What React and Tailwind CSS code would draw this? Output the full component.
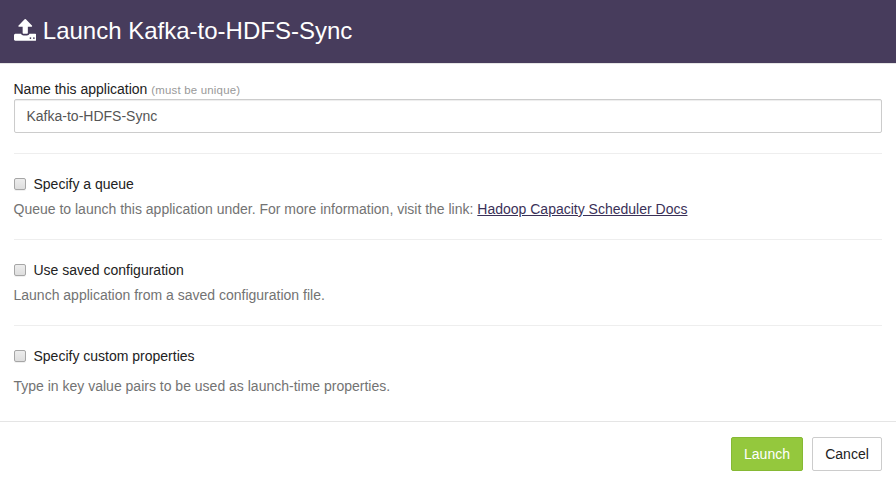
function UploadIcon() {
  return (
    <svg viewBox="64 64 1664 1600" className="mb-[3px] mr-[6.7px] h-[21.8px] w-[22.5px]" fill="currentColor">
      <path d="M1344 1472q0-26-19-45t-45-19-45 19-19 45 19 45 45 19 45-19 19-45zm256 0q0-26-19-45t-45-19-45 19-19 45 19 45 45 19 45-19 19-45zm128-224v320q0 40-28 68t-68 28h-1472q-40 0-68-28t-28-68v-320q0-40 28-68t68-28h427q21 56 70.5 92t110.5 36h256q61 0 110.5-36t70.5-92h427q40 0 68 28t28 68zm-325-648q-17 40-59 40h-256v448q0 26-19 45t-45 19h-256q-26 0-45-19t-19-45v-448h-256q-42 0-59-40-17-39 14-69l448-448q18-19 45-19t45 19l448 448q31 30 14 69z" />
    </svg>
  );
}

function Option({ title, children, gap }) {
  return (
    <section className="mt-5 border-t border-[#eeeeee] pt-5">
      <label className="flex h-5 items-center">
        <span className="mr-[8px] h-3 w-3 rounded-[2px] border border-[#a6a6a6] bg-linear-to-b from-[#ededed] to-[#dedede] shadow-[0_1px_0_rgba(0,0,0,0.06)]" />
        {title}
      </label>
      <p className={gap ? "mt-[10px] text-[#737373]" : "mt-[5px] text-[#737373]"}>{children}</p>
    </section>
  );
}

export default function App() {
  return (
    <div className="flex h-[482px] w-[896px] flex-col bg-white font-['Liberation_Sans',Arial,sans-serif] text-[14px] leading-5 text-[#222222]">
      <header className="flex h-[64px] items-center border-b border-[#e5e5e5] bg-[#473c5c] pl-[13.6px] text-white">
        <UploadIcon />
        <h1 className="mb-[2px] text-[24px] leading-[34px]">Launch Kafka-to-HDFS-Sync</h1>
      </header>
      <main className="h-[357px] pt-[15px] pr-[14px] pl-[13.5px]">
        <label className="block h-5">
          Name this application{" "}
          <small className="text-[11.45px] tracking-[0.2px] text-[#999999]">(must be unique)</small>
        </label>
        <input
          className="block h-[34px] w-full rounded-[2px] border border-[#cccccc] px-3 text-[#555555] shadow-[inset_0_1px_1px_rgba(0,0,0,0.075)]"
          defaultValue="Kafka-to-HDFS-Sync"
        />
        <Option title="Specify a queue">
          Queue to launch this application under. For more information, visit the link:{" "}
          <a className="text-[#3a3158] underline">Hadoop Capacity Scheduler Docs</a>
        </Option>
        <Option title="Use saved configuration">Launch application from a saved configuration file.</Option>
        <Option title="Specify custom properties" gap>
          Type in key value pairs to be used as launch-time properties.
        </Option>
      </main>
      <footer className="flex h-[61px] items-start justify-end gap-[9px] border-t border-[#e5e5e5] pt-[15px] pr-[14px]">
        <button className="h-[34px] w-[72px] rounded-[2px] border border-[#86b934] bg-[#94c83d] text-white">Launch</button>
        <button className="h-[34px] w-[70px] rounded-[2px] border border-[#cccccc] bg-white">Cancel</button>
      </footer>
    </div>
  );
}
